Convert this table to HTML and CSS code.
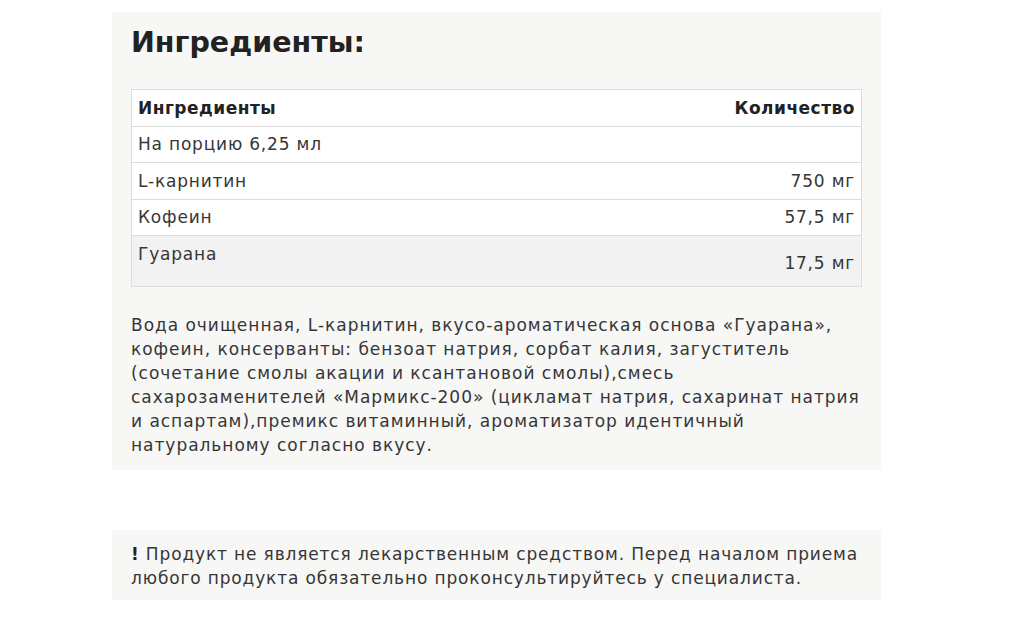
FILE: index.html
```html
<!DOCTYPE html>
<html lang="ru">
<head>
<meta charset="utf-8">
<link rel="stylesheet" href="styles.css">
</head>
<body>
<main class="page">
  <section class="panel">
    <h2 class="title">Ингредиенты:</h2>
    <table class="ing">
      <thead>
        <tr><th class="name">Ингредиенты</th><th class="qty">Количество</th></tr>
      </thead>
      <tbody>
        <tr><td class="name">На порцию 6,25 мл</td><td class="qty"></td></tr>
        <tr><td class="name">L-карнитин</td><td class="qty">750 мг</td></tr>
        <tr><td class="name">Кофеин</td><td class="qty">57,5 мг</td></tr>
        <tr class="alt"><td class="name top">Гуарана</td><td class="qty low">17,5 мг</td></tr>
      </tbody>
    </table>
    <p class="compo">Вода очищенная, L-карнитин, вкусо-ароматическая основа «Гуарана»,<br>кофеин, консерванты: бензоат натрия, сорбат калия, загуститель<br>(сочетание смолы акации и ксантановой смолы),смесь<br>сахарозаменителей «Мармикс-200» (цикламат натрия, сахаринат натрия<br>и аспартам),премикс витаминный, ароматизатор идентичный<br>натуральному согласно вкусу.</p>
  </section>
  <section class="panel notice">
    <p><b class="bang">!</b> Продукт не является лекарственным средством. Перед началом приема<br>любого продукта обязательно проконсультируйтесь у специалиста.</p>
  </section>
</main>
</body>
</html>
```
FILE: styles.css
```css
* { box-sizing: border-box; }
html, body { margin: 0; padding: 0; background: #fff; }
body {
  font-family: "DejaVu Sans", "Noto Sans", sans-serif;
  color: #363636;
}
.page {
  width: 769px;
  margin-left: 112px;
  padding-top: 12px;
  display: flex;
  flex-direction: column;
  gap: 60px;
}
.panel {
  background: #f7f7f6;
  padding: 11px 19px 13px 19px;
}
.title {
  margin: 0 0 26px 0;
  font-size: 28.5px;
  line-height: 40px;
  font-weight: 700;
  color: #222;
}
.ing {
  width: 731px;
  border-collapse: collapse;
  background: #fff;
  font-size: 17px;
  letter-spacing: 0.8px;
  border-left: 1px solid #dcdcdc;
  border-right: 1px solid #dcdcdc;
}
.ing th, .ing td {
  border-top: 1px solid #dcdcdc;
  border-bottom: 1px solid #dcdcdc;
  padding: 0 6px;
  height: 36.5px;
  line-height: 20px;
}
.ing th { font-weight: 700; color: #222; letter-spacing: 0.5px; }
.ing .name { text-align: left; }
.ing .qty { text-align: right; }
.ing tr.alt td { background: #f2f2f2; height: 51px; }
.ing td.top { vertical-align: top; padding-top: 8px; }
.ing td.low { vertical-align: top; padding-top: 17px; }
.compo {
  margin: 26px 0 0 0;
  font-size: 17px;
  letter-spacing: 0.97px;
  line-height: 24px;
  white-space: nowrap;
}
.notice { padding: 12px 19px 10px 19px; }
.notice p {
  margin: 0;
  font-size: 17px;
  letter-spacing: 0.85px;
  line-height: 24px;
  white-space: nowrap;
}
.bang { color: #222; font-weight: 700; }
```
